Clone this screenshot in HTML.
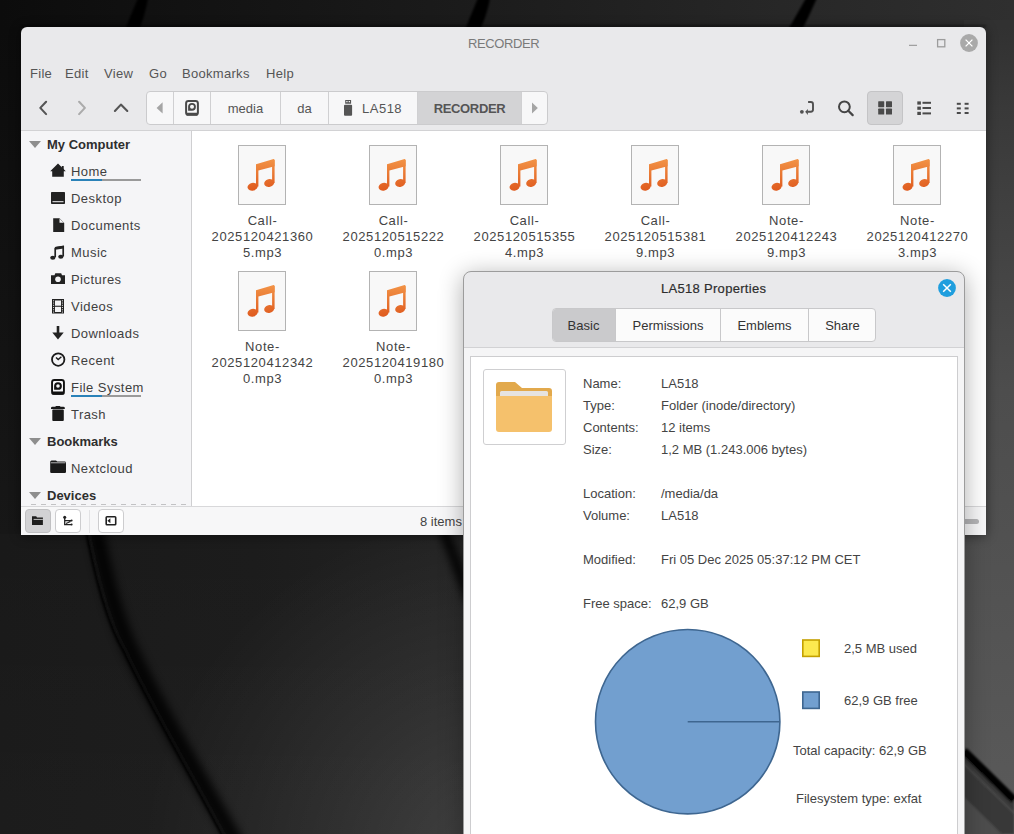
<!DOCTYPE html>
<html><head><meta charset="utf-8">
<style>
*{box-sizing:border-box;margin:0;padding:0}
html,body{width:1014px;height:834px;overflow:hidden}
body{position:relative;font-family:"Liberation Sans",sans-serif;font-size:13px;color:#3c3c3c;background:#151515}
.a{position:absolute}
.t{position:absolute;white-space:nowrap;line-height:16px}
svg{position:absolute;overflow:visible}
#bg{left:0;top:0}
#win{left:21px;top:27px;width:965px;height:508px;background:#e9e9eb;border-radius:6px 6px 0 0;overflow:hidden;box-shadow:0 1px 12px rgba(0,0,0,0.45)}
#side{left:0;top:103px;width:171px;height:376px;background:#f5f5f7;border-right:1px solid #cfcfd1;border-top:1px solid #d2d2d4}
#content{left:171px;top:103px;width:794px;height:376px;background:#fff;border-top:1px solid #d2d2d4}
#status{left:0;top:479px;width:965px;height:29px;background:#f7f7f8;border-top:1px solid #d8d8da}
.sb{position:absolute;top:2px;width:26px;height:24px;border:1px solid #cdcdcf;border-radius:4px;background:#fff}
.path{left:125px;top:64px;width:402px;height:34px;border:1px solid #cbcbcd;border-radius:4px;background:#f7f7f8;overflow:hidden}
.seg{position:absolute;top:0;height:32px;border-left:1px solid #d0d0d2;line-height:32px;text-align:center;color:#555}
.menu{top:39px;color:#555;letter-spacing:0.3px}
.file{position:absolute;width:131px;height:120px}
.ficon{position:absolute;left:41px;top:0;width:48px;height:60px;border:1px solid #b3b3b3;background:#f8f8f8}
.ficon svg{left:0;top:0}
.fname{position:absolute;left:0;top:68px;width:131px;line-height:16px;color:#444;letter-spacing:0.6px;white-space:nowrap;text-align:center}
.sitem{position:absolute;left:29px;width:140px;height:27px}
.sitem .lbl{position:absolute;left:21px;top:6px;line-height:16px;color:#3f3f3f;white-space:nowrap;letter-spacing:0.45px}
.sitem svg{left:0;top:0}
.shead{position:absolute;left:26px;font-weight:bold;color:#2e2e2e}
.tri{position:absolute;left:8px;width:0;height:0;border-left:6px solid transparent;border-right:6px solid transparent;border-top:7px solid #8e8e8e}
.ubar{position:absolute;left:21px;top:21px;width:70px;height:2px;background:#9a9a9a}
.ubar i{position:absolute;left:0;top:0;height:2px;background:#2a82b8}
#dlg{left:463px;top:271px;width:502px;height:580px;background:#e9e9eb;border:1px solid #9c9c9c;border-radius:8px 8px 0 0;box-shadow:0 4px 24px rgba(0,0,0,0.32)}
.tab{position:absolute;top:0;height:32px;line-height:33px;text-align:center;color:#333;border-left:1px solid #c8c8ca}
.lab{position:absolute;left:119px;color:#444;white-space:nowrap;line-height:16px}
.val{position:absolute;left:197px;color:#444;white-space:nowrap;line-height:16px}
</style></head><body>
<svg id="bg" width="1014" height="834" viewBox="0 0 1014 834">
<defs>
<linearGradient id="gt" x1="0" y1="0" x2="1014" y2="0" gradientUnits="userSpaceOnUse">
<stop offset="0" stop-color="#0c0c0c"/><stop offset="0.148" stop-color="#111"/><stop offset="0.454" stop-color="#1b1b1b"/><stop offset="0.77" stop-color="#272727"/><stop offset="1" stop-color="#2f2f2f"/>
</linearGradient>
<linearGradient id="gl" x1="0" y1="27" x2="0" y2="535" gradientUnits="userSpaceOnUse">
<stop offset="0" stop-color="#0c0c0c"/><stop offset="1" stop-color="#171717"/>
</linearGradient>
<linearGradient id="gb" x1="0" y1="0" x2="464" y2="0" gradientUnits="userSpaceOnUse">
<stop offset="0" stop-color="#191919"/><stop offset="0.55" stop-color="#1c1c1c"/><stop offset="1" stop-color="#232323"/>
</linearGradient>
<linearGradient id="gbv" x1="0" y1="535" x2="0" y2="834" gradientUnits="userSpaceOnUse">
<stop offset="0" stop-color="#fff" stop-opacity="0"/><stop offset="1" stop-color="#fff" stop-opacity="0.015"/>
</linearGradient>
<radialGradient id="gr" cx="500" cy="870" r="360" gradientUnits="userSpaceOnUse">
<stop offset="0" stop-color="#fff" stop-opacity="0.13"/><stop offset="0.5" stop-color="#fff" stop-opacity="0.06"/><stop offset="1" stop-color="#fff" stop-opacity="0"/>
</radialGradient>
<linearGradient id="g2" x1="0" y1="27" x2="0" y2="834" gradientUnits="userSpaceOnUse">
<stop offset="0" stop-color="#313131"/><stop offset="0.1" stop-color="#393939"/><stop offset="0.45" stop-color="#4d4d4d"/><stop offset="0.63" stop-color="#515151"/><stop offset="1" stop-color="#5a5a5a"/>
</linearGradient>
<filter id="bl" x="-50%" y="-50%" width="200%" height="200%"><feGaussianBlur stdDeviation="1"/></filter>
<filter id="bl4" x="-50%" y="-50%" width="200%" height="200%"><feGaussianBlur stdDeviation="4"/></filter>
<filter id="bl2" x="-50%" y="-50%" width="200%" height="200%"><feGaussianBlur stdDeviation="0.8"/></filter>
</defs>
<rect width="1014" height="834" fill="#141414"/>
<rect width="1014" height="28" fill="url(#gt)"/>
<rect y="27" width="21" height="510" fill="url(#gl)"/>
<rect y="534" width="470" height="300" fill="url(#gb)"/>
<rect y="534" width="470" height="300" fill="url(#gbv)"/>
<rect y="534" width="470" height="300" fill="url(#gr)"/>
<rect x="964" y="20" width="50" height="814" fill="url(#g2)"/>
<g filter="url(#bl2)">
<path d="M964 748 L1014 797 L1014 834 L964 834 Z" fill="#383838"/>
<path d="M964 797 L1014 846 L964 846 Z" fill="#4e4e4e"/>
<path d="M964 751 L1014 800" stroke="#000" stroke-width="8" fill="none"/>
<path d="M964 764 L1014 813" stroke="#505050" stroke-width="1.5" fill="none"/>
</g>
<g filter="url(#bl)">
<path d="M138 -2 L148 -2 Q146 12 139 30 L125 30 Q132 12 138 -2 Z" fill="#000"/>
<path d="M478 -2 L490 -2 Q488 12 480 30 L465 30 Q472 12 478 -2 Z" fill="#000"/>
<path d="M806 -2 L817 -2 Q810 14 802 30 L788 30 Q797 14 806 -2 Z" fill="#000"/>
</g>
<g fill="none" stroke-linecap="round">
<path d="M94 520 C105 580 118 625 133 655 C160 712 195 770 240 850" stroke="#000" stroke-width="16" opacity="0.85" filter="url(#bl4)"/>
<path d="M84 520 C95 580 108 625 123 650 C150 707 185 765 230 850" stroke="#060606" stroke-width="2.2" filter="url(#bl)"/>
<path d="M86.5 520 C97.5 580 110.5 625 125.5 650 C152.5 707 187.5 765 232.5 850" stroke="#262626" stroke-width="1" opacity="0.7" filter="url(#bl)"/>
<path d="M440 520 Q455 560 470 600" stroke="#000" stroke-width="9" filter="url(#bl4)"/>
</g>
<rect x="21" y="25" width="965" height="2" fill="#000" opacity="0.35" filter="url(#bl2)"/>
</svg>

<div id="win" class="a">
  <div class="t" style="left:447px;top:9px;color:#7a7a7a;letter-spacing:-0.4px">RECORDER</div>
  <svg width="965" height="60" style="left:0;top:0">
    <line x1="888" y1="18.3" x2="896" y2="18.3" stroke="#a0a0a0" stroke-width="1.2"/>
    <rect x="916.6" y="12.6" width="7.2" height="7.2" fill="none" stroke="#9c9c9c" stroke-width="1.3"/>
    <circle cx="948" cy="16" r="8.9" fill="#a9a9a9"/>
    <path d="M944.6 12.6 L951.4 19.4 M951.4 12.6 L944.6 19.4" stroke="#fff" stroke-width="1.3"/>
  </svg>
  <!-- menu -->
  <div class="t menu" style="left:9px">File</div>
  <div class="t menu" style="left:44px">Edit</div>
  <div class="t menu" style="left:83px">View</div>
  <div class="t menu" style="left:128px">Go</div>
  <div class="t menu" style="left:161px">Bookmarks</div>
  <div class="t menu" style="left:245px">Help</div>

  <!-- nav -->
  <svg width="140" height="100" style="left:0;top:0">
    <g fill="none" stroke-width="2.1" stroke-linecap="round" stroke-linejoin="round">
    <path d="M25.1 74.75 L19.3 80.9 L25.1 87.1" stroke="#555"/>
    <path d="M58.1 74.75 L63.9 80.9 L58.1 87.1" stroke="#ababab"/>
    <path d="M93.9 84 L99.9 77.6 L106.3 84" stroke="#555"/>
    </g>
  </svg>

  <div class="a path">
    <div class="seg" style="left:-1px;width:27px;border-left:none"></div>
    <div class="seg" style="left:26px;width:37px"></div>
    <div class="seg" style="left:63px;width:70px;padding-top:1px">media</div>
    <div class="seg" style="left:133px;width:48px;padding-top:1px">da</div>
    <div class="seg" style="left:181px;width:90px;text-align:left;padding-left:33px;padding-top:1px;letter-spacing:0.5px">LA518</div>
    <div class="seg" style="left:270px;width:104px;background:#d3d3d5;font-weight:bold;color:#555;letter-spacing:-0.35px;padding-top:1px">RECORDER</div>
    <div class="seg" style="left:374px;width:27px"></div>
    <svg width="400" height="34" style="left:-1px;top:-1px">
      <path d="M16.6 11.3 L10.6 16.9 L16.6 22.6 Z" fill="#a5a5a5"/>
      <rect x="40.1" y="9.9" width="11.8" height="13.9" rx="2.4" fill="none" stroke="#4a4a4a" stroke-width="2"/>
      <rect x="40.2" y="21.8" width="11.6" height="2.6" rx="1" fill="#4a4a4a"/>
      <path fill-rule="evenodd" fill="#4a4a4a" d="M42.1 15.8 A3.9 3.9 0 1 1 46 19.7 L42.1 19.7 Z M44 15.8 A2 2 0 1 0 48 15.8 A2 2 0 1 0 44 15.8 Z"/>
      <rect x="198" y="13.8" width="8.1" height="11" rx="1" fill="#555"/>
      <path fill-rule="evenodd" fill="#555" d="M199.2 8.9 H205.1 V12.8 H199.2 Z M200.3 9.9 H201.6 V11.2 H200.3 Z M202.7 9.9 H204 V11.2 H202.7 Z"/>
      <path d="M386 11.5 L391.8 17 L386 22.5 Z" fill="#a5a5a5"/>
    </svg>
  </div>

  <!-- right toolbar -->
  <div class="a" style="left:846px;top:64px;width:36px;height:34px;background:#d4d4d6;border:1px solid #c4c4c6;border-radius:4px"></div>
  <svg width="965" height="130" style="left:0;top:0">
    <circle cx="780.9" cy="84.8" r="1.9" fill="#505050"/>
    <path d="M787.1 75 L789.8 75 Q792 75 792 77.2 L792 82.5 Q792 84.7 789.8 84.7 L786.5 84.7" fill="none" stroke="#505050" stroke-width="1.9"/>
    <path d="M784.2 84.7 L786.9 82 L786.9 88 Z" fill="#505050"/>
    <circle cx="823.4" cy="79.8" r="5.4" fill="none" stroke="#454545" stroke-width="2"/>
    <path d="M827.3 83.7 L831.7 88.1" stroke="#454545" stroke-width="2.2" stroke-linecap="round"/>
    <rect x="857.2" y="74.2" width="6" height="6" rx="0.6" fill="#4a4a4a"/>
    <rect x="865" y="74.2" width="6" height="6" rx="0.6" fill="#4a4a4a"/>
    <rect x="857.2" y="81.6" width="6" height="6" rx="0.6" fill="#4a4a4a"/>
    <rect x="865" y="81.6" width="6" height="6" rx="0.6" fill="#4a4a4a"/>
    <rect x="896.3" y="74.4" width="3.6" height="3.2" fill="#4a4a4a"/>
    <rect x="896.3" y="79.6" width="3.6" height="3.2" fill="#4a4a4a"/>
    <rect x="896.3" y="84.8" width="3.6" height="3.2" fill="#4a4a4a"/>
    <rect x="901.5" y="74.8" width="8.5" height="2" fill="#4a4a4a"/>
    <rect x="901.5" y="80" width="8.5" height="2" fill="#4a4a4a"/>
    <rect x="901.5" y="85.4" width="8.5" height="2" fill="#4a4a4a"/>
    <rect x="935.8" y="75.8" width="4" height="2" fill="#4a4a4a"/>
    <rect x="943.6" y="75.8" width="4" height="2" fill="#4a4a4a"/>
    <rect x="935.8" y="80.4" width="4" height="2" fill="#4a4a4a"/>
    <rect x="943.6" y="80.4" width="4" height="2" fill="#4a4a4a"/>
    <rect x="935.8" y="85" width="4" height="2" fill="#4a4a4a"/>
    <rect x="943.6" y="85" width="4" height="2" fill="#4a4a4a"/>
  </svg>

  <div id="side" class="a">
<div class="tri" style="top:10px"></div><div class="shead t" style="top:6px">My Computer</div>
<div class="sitem" style="top:27px"><svg width="18" height="22" viewBox="0 0 18 22" style="top:3px"><path d="M8 2.6 L15.8 10.2 L13.8 10.2 L13.8 15.8 L2.2 15.8 L2.2 10.2 L0.2 10.2 Z" fill="#222"/><rect x="11.8" y="5" width="1.9" height="4" fill="#222"/></svg><div class="lbl">Home</div><div class="ubar"><i style="width:31px"></i></div></div>
<div class="sitem" style="top:54px"><svg width="18" height="22" viewBox="0 0 18 22" style="top:4px"><rect x="1" y="3" width="14" height="12" rx="0.8" fill="#222"/><rect x="2.5" y="12.2" width="11" height="1" fill="#f3f3f5"/></svg><div class="lbl">Desktop</div></div>
<div class="sitem" style="top:81px"><svg width="18" height="22" viewBox="0 0 18 22" style="top:4px"><path d="M3.2 2.3 L9.5 2.3 L14.2 7 L14.2 15.9 L3.2 15.9 Z" fill="#222"/><path d="M9.5 2.6 L9.5 6.8 L13.8 6.8 Z" fill="#f3f3f5"/></svg><div class="lbl">Documents</div></div>
<div class="sitem" style="top:108px"><svg width="18" height="22" viewBox="0 0 18 22" style="top:4px"><path d="M5.2 4.8 L13.2 3.6 L13.2 13.5" fill="none" stroke="#222" stroke-width="1.7"/><path d="M5.2 4.8 L5.2 14.3" stroke="#222" stroke-width="1.7"/><path d="M5.2 4 L13.6 2.8 L13.6 5.6 L5.2 6.8 Z" fill="#222"/><ellipse cx="2.8" cy="14.7" rx="2.6" ry="2" fill="#222"/><ellipse cx="10.8" cy="13.8" rx="2.6" ry="2" fill="#222"/></svg><div class="lbl">Music</div></div>
<div class="sitem" style="top:135px"><svg width="18" height="22" viewBox="0 0 18 22" style="top:3px"><path d="M1 6.3 L4.5 6.3 L5.3 4.2 L11.2 4.2 L12 6.3 L15 6.3 L15 14.9 L1 14.9 Z" fill="#222"/><circle cx="8" cy="10.2" r="2.8" fill="#f3f3f5"/></svg><div class="lbl">Pictures</div></div>
<div class="sitem" style="top:162px"><svg width="18" height="22" viewBox="0 0 18 22" style="top:3px"><rect x="2" y="3" width="12" height="14.5" fill="#222"/><rect x="5" y="4.5" width="6" height="5.2" fill="#f3f3f5"/><rect x="5" y="10.8" width="6" height="5.2" fill="#f3f3f5"/><rect x="3.1" y="4.30" width="1" height="1" fill="#f3f3f5"/><rect x="11.9" y="4.30" width="1" height="1" fill="#f3f3f5"/><rect x="3.1" y="6.55" width="1" height="1" fill="#f3f3f5"/><rect x="11.9" y="6.55" width="1" height="1" fill="#f3f3f5"/><rect x="3.1" y="8.80" width="1" height="1" fill="#f3f3f5"/><rect x="11.9" y="8.80" width="1" height="1" fill="#f3f3f5"/><rect x="3.1" y="11.05" width="1" height="1" fill="#f3f3f5"/><rect x="11.9" y="11.05" width="1" height="1" fill="#f3f3f5"/><rect x="3.1" y="13.30" width="1" height="1" fill="#f3f3f5"/><rect x="11.9" y="13.30" width="1" height="1" fill="#f3f3f5"/><rect x="3.1" y="15.55" width="1" height="1" fill="#f3f3f5"/><rect x="11.9" y="15.55" width="1" height="1" fill="#f3f3f5"/></svg><div class="lbl">Videos</div></div>
<div class="sitem" style="top:189px"><svg width="18" height="22" viewBox="0 0 18 22" style="top:3px"><rect x="6.7" y="3" width="2.6" height="7" fill="#222"/><path d="M2.3 9.6 L13.7 9.6 L8 16.4 Z" fill="#222"/></svg><div class="lbl">Downloads</div></div>
<div class="sitem" style="top:216px"><svg width="18" height="22" viewBox="0 0 18 22" style="top:3px"><circle cx="8.2" cy="9.6" r="6.2" fill="none" stroke="#1a1a1a" stroke-width="1.8"/><path d="M6 7.6 L8.2 9.6 L11.4 6.8" fill="none" stroke="#1a1a1a" stroke-width="1.4"/></svg><div class="lbl">Recent</div></div>
<div class="sitem" style="top:243px"><svg width="18" height="22" viewBox="0 0 18 22" style="top:3px"><rect x="2.05" y="2.95" width="11.9" height="13.8" rx="2.4" fill="none" stroke="#111" stroke-width="1.9"/><rect x="1.5" y="14.4" width="13" height="3.3" rx="1.5" fill="#111"/><path fill-rule="evenodd" fill="#111" d="M4.13 9 A3.87 3.87 0 1 1 8 12.87 L4.13 12.87 Z M6.2 9 A1.8 1.8 0 1 0 9.8 9 A1.8 1.8 0 1 0 6.2 9 Z"/></svg><div class="lbl">File System</div><div class="ubar"><i style="width:31px"></i></div></div>
<div class="sitem" style="top:270px"><svg width="18" height="22" viewBox="0 0 18 22" style="top:1px"><path d="M1 6.1 Q1 4.8 2.5 4.8 L13.3 4.8 Q14.8 4.8 14.8 6.1 L14.8 7.1 L1 7.1 Z" fill="#1a1a1a"/><rect x="5.5" y="3.9" width="4.8" height="1.5" rx="0.6" fill="#1a1a1a"/><rect x="2.3" y="7.6" width="11.5" height="11.3" rx="0.9" fill="#1a1a1a"/></svg><div class="lbl">Trash</div></div>
<div class="sitem" style="top:324px"><svg width="18" height="22" viewBox="0 0 18 22" style="top:1px"><path d="M0.2 6 Q0.2 4.4 1.6 4.4 L6 4.4 L7.2 5.6 L14.6 5.6 Q16 5.6 16 7 L16 16 Q16 17.1 14.8 17.1 L1.4 17.1 Q0.2 17.1 0.2 16 Z" fill="#1a1a1a"/><rect x="0.8" y="6.5" width="14.6" height="0.7" fill="#f5f5f7"/></svg><div class="lbl">Nextcloud</div></div>
<div class="tri" style="top:307px"></div><div class="shead t" style="top:303px">Bookmarks</div>
<div class="tri" style="top:361px"></div><div class="shead t" style="top:357px">Devices</div>
<div class="a" style="left:6px;top:373px;width:160px;height:1px;background:repeating-linear-gradient(90deg,#c2c2c4 0 5px,transparent 5px 10px);background-position:4px 0"></div>
  </div>

  <div id="content" class="a">
<div class="file" style="left:5px;top:14px"><div class="ficon"><svg width="48" height="60" viewBox="0 0 48 60" style="left:-1px;top:-1px"><defs><linearGradient id="ng0" x1="0" y1="14" x2="0" y2="46" gradientUnits="userSpaceOnUse"><stop offset="0" stop-color="#f29346"/><stop offset="1" stop-color="#df5a1e"/></linearGradient></defs>
<g fill="url(#ng0)"><path d="M18 19.2 L34.8 14.2 Q36.6 13.8 36.6 15.4 L36.6 21.2 L20.4 25.6 L20.4 41.5 L18 41.5 Z"/><rect x="34.1" y="15" width="2.5" height="23"/>
<ellipse cx="14.6" cy="41.8" rx="5.1" ry="3.9" transform="rotate(-14 14.6 41.8)"/><ellipse cx="31.2" cy="38" rx="5.1" ry="3.9" transform="rotate(-14 31.2 38)"/></g></svg></div><div class="fname">Call-<br>2025120421360<br>5.mp3</div></div>
<div class="file" style="left:136px;top:14px"><div class="ficon"><svg width="48" height="60" viewBox="0 0 48 60" style="left:-1px;top:-1px"><defs><linearGradient id="ng1" x1="0" y1="14" x2="0" y2="46" gradientUnits="userSpaceOnUse"><stop offset="0" stop-color="#f29346"/><stop offset="1" stop-color="#df5a1e"/></linearGradient></defs>
<g fill="url(#ng1)"><path d="M18 19.2 L34.8 14.2 Q36.6 13.8 36.6 15.4 L36.6 21.2 L20.4 25.6 L20.4 41.5 L18 41.5 Z"/><rect x="34.1" y="15" width="2.5" height="23"/>
<ellipse cx="14.6" cy="41.8" rx="5.1" ry="3.9" transform="rotate(-14 14.6 41.8)"/><ellipse cx="31.2" cy="38" rx="5.1" ry="3.9" transform="rotate(-14 31.2 38)"/></g></svg></div><div class="fname">Call-<br>2025120515222<br>0.mp3</div></div>
<div class="file" style="left:267px;top:14px"><div class="ficon"><svg width="48" height="60" viewBox="0 0 48 60" style="left:-1px;top:-1px"><defs><linearGradient id="ng2" x1="0" y1="14" x2="0" y2="46" gradientUnits="userSpaceOnUse"><stop offset="0" stop-color="#f29346"/><stop offset="1" stop-color="#df5a1e"/></linearGradient></defs>
<g fill="url(#ng2)"><path d="M18 19.2 L34.8 14.2 Q36.6 13.8 36.6 15.4 L36.6 21.2 L20.4 25.6 L20.4 41.5 L18 41.5 Z"/><rect x="34.1" y="15" width="2.5" height="23"/>
<ellipse cx="14.6" cy="41.8" rx="5.1" ry="3.9" transform="rotate(-14 14.6 41.8)"/><ellipse cx="31.2" cy="38" rx="5.1" ry="3.9" transform="rotate(-14 31.2 38)"/></g></svg></div><div class="fname">Call-<br>2025120515355<br>4.mp3</div></div>
<div class="file" style="left:398px;top:14px"><div class="ficon"><svg width="48" height="60" viewBox="0 0 48 60" style="left:-1px;top:-1px"><defs><linearGradient id="ng3" x1="0" y1="14" x2="0" y2="46" gradientUnits="userSpaceOnUse"><stop offset="0" stop-color="#f29346"/><stop offset="1" stop-color="#df5a1e"/></linearGradient></defs>
<g fill="url(#ng3)"><path d="M18 19.2 L34.8 14.2 Q36.6 13.8 36.6 15.4 L36.6 21.2 L20.4 25.6 L20.4 41.5 L18 41.5 Z"/><rect x="34.1" y="15" width="2.5" height="23"/>
<ellipse cx="14.6" cy="41.8" rx="5.1" ry="3.9" transform="rotate(-14 14.6 41.8)"/><ellipse cx="31.2" cy="38" rx="5.1" ry="3.9" transform="rotate(-14 31.2 38)"/></g></svg></div><div class="fname">Call-<br>2025120515381<br>9.mp3</div></div>
<div class="file" style="left:529px;top:14px"><div class="ficon"><svg width="48" height="60" viewBox="0 0 48 60" style="left:-1px;top:-1px"><defs><linearGradient id="ng4" x1="0" y1="14" x2="0" y2="46" gradientUnits="userSpaceOnUse"><stop offset="0" stop-color="#f29346"/><stop offset="1" stop-color="#df5a1e"/></linearGradient></defs>
<g fill="url(#ng4)"><path d="M18 19.2 L34.8 14.2 Q36.6 13.8 36.6 15.4 L36.6 21.2 L20.4 25.6 L20.4 41.5 L18 41.5 Z"/><rect x="34.1" y="15" width="2.5" height="23"/>
<ellipse cx="14.6" cy="41.8" rx="5.1" ry="3.9" transform="rotate(-14 14.6 41.8)"/><ellipse cx="31.2" cy="38" rx="5.1" ry="3.9" transform="rotate(-14 31.2 38)"/></g></svg></div><div class="fname">Note-<br>2025120412243<br>9.mp3</div></div>
<div class="file" style="left:660px;top:14px"><div class="ficon"><svg width="48" height="60" viewBox="0 0 48 60" style="left:-1px;top:-1px"><defs><linearGradient id="ng5" x1="0" y1="14" x2="0" y2="46" gradientUnits="userSpaceOnUse"><stop offset="0" stop-color="#f29346"/><stop offset="1" stop-color="#df5a1e"/></linearGradient></defs>
<g fill="url(#ng5)"><path d="M18 19.2 L34.8 14.2 Q36.6 13.8 36.6 15.4 L36.6 21.2 L20.4 25.6 L20.4 41.5 L18 41.5 Z"/><rect x="34.1" y="15" width="2.5" height="23"/>
<ellipse cx="14.6" cy="41.8" rx="5.1" ry="3.9" transform="rotate(-14 14.6 41.8)"/><ellipse cx="31.2" cy="38" rx="5.1" ry="3.9" transform="rotate(-14 31.2 38)"/></g></svg></div><div class="fname">Note-<br>2025120412270<br>3.mp3</div></div>
<div class="file" style="left:5px;top:140px"><div class="ficon"><svg width="48" height="60" viewBox="0 0 48 60" style="left:-1px;top:-1px"><defs><linearGradient id="ng6" x1="0" y1="14" x2="0" y2="46" gradientUnits="userSpaceOnUse"><stop offset="0" stop-color="#f29346"/><stop offset="1" stop-color="#df5a1e"/></linearGradient></defs>
<g fill="url(#ng6)"><path d="M18 19.2 L34.8 14.2 Q36.6 13.8 36.6 15.4 L36.6 21.2 L20.4 25.6 L20.4 41.5 L18 41.5 Z"/><rect x="34.1" y="15" width="2.5" height="23"/>
<ellipse cx="14.6" cy="41.8" rx="5.1" ry="3.9" transform="rotate(-14 14.6 41.8)"/><ellipse cx="31.2" cy="38" rx="5.1" ry="3.9" transform="rotate(-14 31.2 38)"/></g></svg></div><div class="fname">Note-<br>2025120412342<br>0.mp3</div></div>
<div class="file" style="left:136px;top:140px"><div class="ficon"><svg width="48" height="60" viewBox="0 0 48 60" style="left:-1px;top:-1px"><defs><linearGradient id="ng7" x1="0" y1="14" x2="0" y2="46" gradientUnits="userSpaceOnUse"><stop offset="0" stop-color="#f29346"/><stop offset="1" stop-color="#df5a1e"/></linearGradient></defs>
<g fill="url(#ng7)"><path d="M18 19.2 L34.8 14.2 Q36.6 13.8 36.6 15.4 L36.6 21.2 L20.4 25.6 L20.4 41.5 L18 41.5 Z"/><rect x="34.1" y="15" width="2.5" height="23"/>
<ellipse cx="14.6" cy="41.8" rx="5.1" ry="3.9" transform="rotate(-14 14.6 41.8)"/><ellipse cx="31.2" cy="38" rx="5.1" ry="3.9" transform="rotate(-14 31.2 38)"/></g></svg></div><div class="fname">Note-<br>2025120419180<br>0.mp3</div></div>
  </div>

  <div id="status" class="a">
    <div class="sb" style="left:4px;background:#d2d2d4;border-color:#c0c0c2"></div>
    <div class="sb" style="left:34px"></div>
    <div class="a" style="left:68px;top:3px;width:1px;height:23px;background:#e2e2e4"></div>
    <div class="sb" style="left:77px"></div>
    <svg width="130" height="30" style="left:0;top:0px">
      <path d="M11 9.3 L15.2 9.3 L16 10.6 L21.9 10.6 L21.9 18.1 L11 18.1 Z" fill="#1e1e1e"/>
      <rect x="13" y="12.2" width="9" height="6" fill="#f0f0f0" opacity="0"/>
      <path d="M12.6 12.4 L21.9 12.4" stroke="#d2d2d4" stroke-width="0.9"/>
      <circle cx="43.7" cy="10.2" r="1.5" fill="#222"/>
      <path d="M43.7 10.5 L43.7 17.6 L50.5 17.6 M43.7 13.6 L50.5 13.6 M45 16.5 L49.5 14.5" fill="none" stroke="#222" stroke-width="1.3"/>
      <circle cx="50.6" cy="13.6" r="1" fill="#222"/><circle cx="50.6" cy="17.6" r="1" fill="#222"/>
      <rect x="85.2" y="9.8" width="9.5" height="8" rx="0.8" fill="none" stroke="#222" stroke-width="1.6"/>
      <path d="M89.4 11.3 L86.4 13.8 L89.4 16.3 Z" fill="#222"/>
    </svg>
    <div class="t" style="left:399px;top:7px;color:#444">8 items</div>
    <div class="a" style="left:905px;top:12px;width:53px;height:5px;border-radius:3px;background:#b5b5b7"></div>
  </div>
</div>

<div id="dlg" class="a">

  <div class="t" style="left:197px;top:9px;color:#2e2e2e;letter-spacing:0.3px;-webkit-text-stroke:0.2px #2e2e2e">LA518 Properties</div>
  <svg width="30" height="30" style="left:473px;top:6px"><circle cx="10" cy="10" r="8.9" fill="#1f9ede"/><path d="M6.2 6.2 L13.8 13.8 M13.8 6.2 L6.2 13.8" stroke="#fff" stroke-width="1.5"/></svg>
  <div class="a" style="left:88px;top:36px;width:324px;height:34px;border:1px solid #c8c8ca;border-radius:4px;background:#fbfbfb;overflow:hidden">
    <div class="tab" style="left:-1px;width:63px;background:#cacacc;border-left:none">Basic</div>
    <div class="tab" style="left:62px;width:105px">Permissions</div>
    <div class="tab" style="left:167px;width:88px">Emblems</div>
    <div class="tab" style="left:255px;width:68px">Share</div>
  </div>
  <div class="a" style="left:0;top:75px;width:500px;height:510px;background:#f5f5f6;border-top:1px solid #d2d2d4"></div>
  <div class="a" style="left:6px;top:84px;width:488px;height:500px;background:#fff;border:1px solid #cdcdcf"></div>
  <div class="a" style="left:19px;top:97px;width:83px;height:76px;border:1px solid #cfcfd1;border-radius:3px;background:#fff"></div>
  <svg width="60" height="54" style="left:32px;top:110px" viewBox="0 0 60 54">
    <path d="M0 3 Q0 0 3 0 L19 0 L26 6 L53 6 Q56 6 56 9 L56 20 L0 20 Z" fill="#e2a94c"/>
    <rect x="4" y="9" width="48" height="8" rx="1.5" fill="#e6e3e0"/>
    <path d="M0 14 L56 14 L56 47 Q56 50 53 50 L3 50 Q0 50 0 47 Z" fill="#f5c16c"/>
  </svg>
  <div class="lab" style="top:104px">Name:</div><div class="val" style="top:104px">LA518</div>
  <div class="lab" style="top:126px">Type:</div><div class="val" style="top:126px">Folder (inode/directory)</div>
  <div class="lab" style="top:148px">Contents:</div><div class="val" style="top:148px">12 items</div>
  <div class="lab" style="top:170px">Size:</div><div class="val" style="top:170px">1,2 MB (1.243.006 bytes)</div>
  <div class="lab" style="top:214px">Location:</div><div class="val" style="top:214px">/media/da</div>
  <div class="lab" style="top:236px">Volume:</div><div class="val" style="top:236px">LA518</div>
  <div class="lab" style="top:280px">Modified:</div><div class="val" style="top:280px">Fri 05 Dec 2025 05:37:12 PM CET</div>
  <div class="lab" style="top:324px">Free space:</div><div class="val" style="top:324px">62,9 GB</div>
  <svg width="500" height="570" style="left:-1px;top:-1px">
    <circle cx="224.7" cy="450.7" r="92.2" fill="#729fcf" stroke="#3e6690" stroke-width="1.6"/>
    <line x1="224.7" y1="450.7" x2="317" y2="450.7" stroke="#3e6690" stroke-width="1.6"/>
    <rect x="339.8" y="369" width="16.4" height="16.4" fill="#fce94f" stroke="#c4a000" stroke-width="1.6"/>
    <rect x="339.8" y="421" width="16.4" height="16.4" fill="#729fcf" stroke="#3e6690" stroke-width="1.6"/>
  </svg>
  <div class="t" style="left:380px;top:369px;color:#444">2,5 MB used</div>
  <div class="t" style="left:380px;top:421px;color:#444">62,9 GB free</div>
  <div class="t" style="left:329px;top:471px;color:#444">Total capacity: 62,9 GB</div>
  <div class="t" style="left:332px;top:519px;color:#444">Filesystem type: exfat</div>

</div>
</body></html>
